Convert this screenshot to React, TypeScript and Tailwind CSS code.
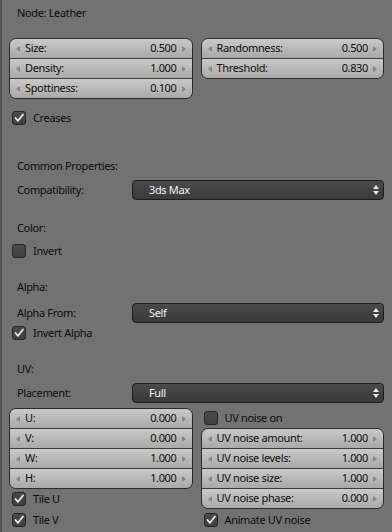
import React from "react";

type Pair = [string, string];

const font = { fontFamily: '"Noto Sans", "DejaVu Sans", sans-serif' };

const LeftArrow = () => (
  <svg width="4" height="6" viewBox="0 0 4 6">
    <path d="M4 0 L0 3 L4 6 Z" fill="#858585" />
  </svg>
);

const RightArrow = () => (
  <svg width="4" height="6" viewBox="0 0 4 6">
    <path d="M0 0 L4 3 L0 6 Z" fill="#858585" />
  </svg>
);

const NumGroup = ({ rows }: { rows: Pair[] }) => (
  <div className="overflow-hidden rounded-[7px] border border-[#2b2b2b]">
    {rows.map(([label, value], i) => (
      <div
        key={label}
        className={
          i === 0
            ? "flex h-[19px] items-center bg-linear-to-b from-[#c9c9c9] to-[#a9a9a9] pl-[6px] pr-[6px]"
            : "flex h-[20px] items-center border-t border-[#3d3d3d] bg-linear-to-b from-[#c9c9c9] to-[#a9a9a9] pl-[6px] pr-[6px]"
        }
      >
        <LeftArrow />
        <span className="ml-[5px] flex-1 text-[#0d0d0d]">{label}</span>
        <span className="mr-[5px] text-[#0d0d0d]">{value}</span>
        <RightArrow />
      </div>
    ))}
  </div>
);

const Check = ({ label, on, className }: { label: string; on?: boolean; className?: string }) => (
  <div className={`flex h-[20px] items-center pl-[3px] ${className ?? ""}`}>
    <div className="flex h-[14px] w-[14px] items-center justify-center rounded-[3px] border border-[#262626] bg-linear-to-b from-[#4c4c4c] to-[#404040]">
      {on && (
        <svg width="12" height="12" viewBox="0 0 12 12">
          <path
            d="M2.5 6 L5 8.8 L10 2.5"
            fill="none"
            stroke="#e8e8e8"
            strokeWidth="1.8"
            strokeLinecap="round"
            strokeLinejoin="round"
          />
        </svg>
      )}
    </div>
    <span className="ml-[7px] text-[#0d0d0d]">{label}</span>
  </div>
);

const Heading = ({ text, className }: { text: string; className?: string }) => (
  <div className={`flex h-[20px] items-center pl-[8px] text-[#0d0d0d] ${className ?? ""}`}>{text}</div>
);

const Select = ({ label, value, className }: { label: string; value: string; className?: string }) => (
  <div className={`flex h-[20px] items-center ${className ?? ""}`}>
    <span className="w-[123px] pl-[8px] text-[#0d0d0d]">{label}</span>
    <div className="flex h-[20px] flex-1 items-center rounded-[4px] border border-[#1c1c1c] bg-linear-to-b from-[#4a4a4a] to-[#3a3a3a] pl-[16px] pr-[4px]">
      <span className="flex-1 text-[#f2f2f2]">{value}</span>
      <svg width="6" height="12" viewBox="0 0 6 12">
        <path d="M3 1 L6 5 L0 5 Z" fill="#e6e6e6" />
        <path d="M0 7 L6 7 L3 11 Z" fill="#e6e6e6" />
      </svg>
    </div>
  </div>
);

const App = () => {
  return (
    <div
      className="h-[532px] w-[392px] overflow-hidden border-l-2 border-[#525252] bg-[#727272] pl-[7px] pr-[8px] pt-[3px] text-[11px] tracking-[-0.35px]"
      style={font}
    >
      {/* Node name */}
      <Heading text="Node: Leather" />

      {/* Node settings */}
      <div className="mt-[15px] grid grid-cols-2 gap-[8px]">
        <NumGroup
          rows={[
            ["Size:", "0.500"],
            ["Density:", "1.000"],
            ["Spottiness:", "0.100"],
          ]}
        />
        <div>
          <NumGroup
            rows={[
              ["Randomness:", "0.500"],
              ["Threshold:", "0.830"],
            ]}
          />
        </div>
      </div>
      <Check label="Creases" on className="mt-[9px]" />

      {/* Common */}
      <Heading text="Common Properties:" className="mt-[28px]" />
      <Select label="Compatibility:" value="3ds Max" className="mt-[4px]" />

      <Heading text="Color:" className="mt-[18px]" />
      <Check label="Invert" className="mt-[3px]" />

      <Heading text="Alpha:" className="mt-[16px]" />
      <Select label="Alpha From:" value="Self" className="mt-[6px]" />
      <Check label="Invert Alpha" on />

      <Heading text="UV:" className="mt-[16px]" />
      <Select label="Placement:" value="Full" className="mt-[4px]" />

      {/* UV settings */}
      <div className="mt-[5px] grid grid-cols-2 gap-[8px]">
        <div>
          <NumGroup
            rows={[
              ["U:", "0.000"],
              ["V:", "0.000"],
              ["W:", "1.000"],
              ["H:", "1.000"],
            ]}
          />
          <Check label="Tile U" on />
          <Check label="Tile V" on className="mt-[1px]" />
        </div>
        <div>
          <Check label="UV noise on" />
          <NumGroup
            rows={[
              ["UV noise amount:", "1.000"],
              ["UV noise levels:", "1.000"],
              ["UV noise size:", "1.000"],
              ["UV noise phase:", "0.000"],
            ]}
          />
          <Check label="Animate UV noise" on className="mt-[1px]" />
        </div>
      </div>
    </div>
  );
};

export default App;
